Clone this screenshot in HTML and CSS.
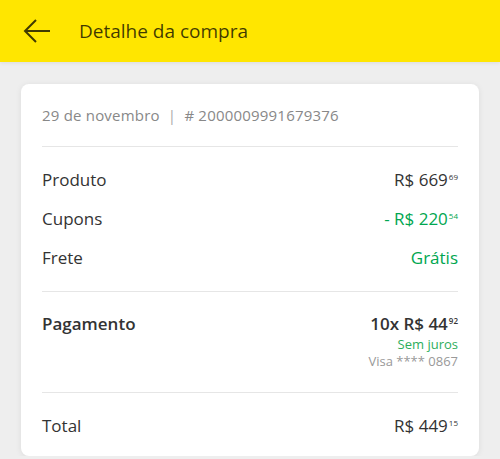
FILE: index.html
```html
<!DOCTYPE html>
<html>

<head>
  <title>Detalhe da compra</title>
  <link rel="stylesheet" href="styles.css">
</head>

<body>
  <header class="topbar">
    <button class="back" type="button" aria-label="Voltar">
      <svg width="30" height="26" viewBox="0 0 30 26">
        <path d="M28 13H3M14 2L3 13l11 11" fill="none" stroke="currentColor" stroke-width="2" />
      </svg>
    </button>
    <h1>Detalhe da compra</h1>
  </header>

  <div class="card">
    <div class="section meta">
      <span>29 de novembro</span>
      <span class="sep">|</span>
      <span># 2000009991679376</span>
    </div>

    <div class="section rows">
      <div class="row">
        <span>Produto</span>
        <span class="price">R$ 669<sup>69</sup></span>
      </div>
      <div class="row">
        <span>Cupons</span>
        <span class="price green">- R$ 220<sup>54</sup></span>
      </div>
      <div class="row">
        <span>Frete</span>
        <span class="green">Grátis</span>
      </div>
    </div>

    <div class="section payment">
      <div class="row strong">
        <span>Pagamento</span>
        <span class="price">10x R$ 44<sup>92</sup></span>
      </div>
      <div class="note green">Sem juros</div>
      <div class="note muted">Visa **** 0867</div>
    </div>

    <div class="section total">
      <div class="row">
        <span>Total</span>
        <span class="price">R$ 449<sup>15</sup></span>
      </div>
    </div>
  </div>
</body>

</html>
```

FILE: styles.css
```css
body {
  font-family: 'Open Sans', sans-serif;
  background-color: #eeeeee;
  margin: 0;
  color: #333;
}

.topbar {
  background-color: #ffe600;
  height: 62px;
  display: flex;
  align-items: center;
  box-shadow: 0 1px 4px rgba(0, 0, 0, 0.08);
}

.back {
  background: none;
  border: none;
  padding: 0;
  margin-left: 22px;
  margin-right: 27px;
  color: rgba(0, 0, 0, 0.75);
  display: flex;
}

.topbar h1 {
  margin: 0;
  font-size: 19px;
  font-weight: 400;
  color: rgba(0, 0, 0, 0.75);
}

.card {
  background-color: #fff;
  margin: 22px 21px 0;
  padding: 0 21px;
  border-radius: 8px;
  box-shadow: 0 1px 6px rgba(0, 0, 0, 0.08);
}

.section {
  border-bottom: 1px solid #e6e6e6;
}

.section:last-child {
  border-bottom: none;
}

.meta {
  padding: 21px 0;
  font-size: 15px;
  line-height: 20px;
  color: #888;
  letter-spacing: 0.2px;
}

.meta .sep {
  margin: 0 4px;
  color: #aaa;
}

.rows {
  padding: 21px 0;
  display: flex;
  flex-direction: column;
  gap: 15px;
}

.row {
  display: flex;
  justify-content: space-between;
  font-size: 17px;
  line-height: 24px;
}

.price sup {
  font-size: 8px;
  vertical-align: top;
  position: relative;
  top: -3px;
  margin-left: 1px;
}

.green {
  color: #00a650;
}

.payment {
  padding: 20px 0 22px;
}

.strong {
  font-weight: 600;
}

.note {
  text-align: right;
  font-size: 13px;
  line-height: 17px;
}

.note.green {
  color: #2dae5c;
}

.muted {
  color: #999;
}

.total {
  padding: 21px 0 18px;
}
```
